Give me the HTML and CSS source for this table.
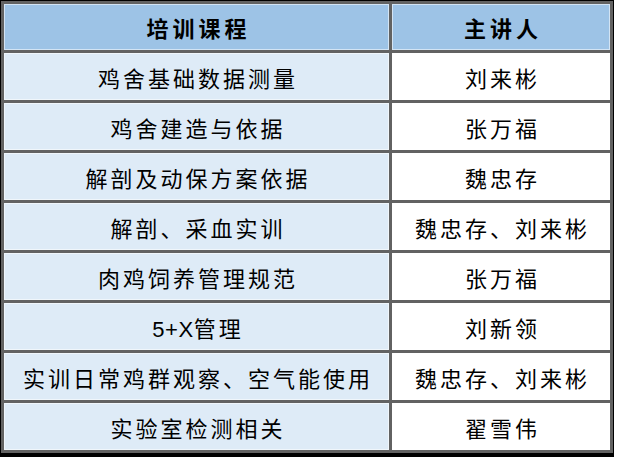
FILE: index.html
```html
<!DOCTYPE html>
<html lang="zh-CN">
<head>
<meta charset="utf-8">
<title>培训课程</title>
<link rel="stylesheet" href="styles.css">
</head>
<body>
<div class="frame">
<table class="schedule">
<thead>
<tr><th class="course">培训课程</th><th class="teacher">主讲人</th></tr>
</thead>
<tbody>
<tr><td class="course">鸡舍基础数据测量</td><td class="teacher">刘来彬</td></tr>
<tr><td class="course">鸡舍建造与依据</td><td class="teacher">张万福</td></tr>
<tr><td class="course">解剖及动保方案依据</td><td class="teacher">魏忠存</td></tr>
<tr><td class="course">解剖、采血实训</td><td class="teacher">魏忠存、刘来彬</td></tr>
<tr><td class="course">肉鸡饲养管理规范</td><td class="teacher">张万福</td></tr>
<tr><td class="course"><span class="latin">5+X</span>管理</td><td class="teacher">刘新领</td></tr>
<tr><td class="course">实训日常鸡群观察、空气能使用</td><td class="teacher">魏忠存、刘来彬</td></tr>
<tr><td class="course">实验室检测相关</td><td class="teacher">翟雪伟</td></tr>
</tbody>
</table>
</div>
</body>
</html>
```
FILE: styles.css
```css
html, body {
  margin: 0;
  padding: 0;
  background: #ffffff;
}

.frame {
  width: 610px;
  border-style: solid;
  border-color: #000000;
  border-width: 1px 3px 4px 1px;
}

.schedule {
  width: 610px;
  border-collapse: collapse;
  table-layout: fixed;
  font-family: "Liberation Sans", "Noto Sans CJK SC", sans-serif;
  font-size: 22px;
  color: #000000;
}

.schedule th,
.schedule td {
  border: 3px solid #626262;
  padding: 0 0 0 3px;
  text-align: center;
  vertical-align: middle;
  letter-spacing: 3px;
  box-shadow: inset 0 0 0 1px rgba(255, 255, 255, 0.55);
  white-space: nowrap;
}

.schedule th {
  height: 46px;
  background: #9dc3e6;
  font-weight: bold;
  letter-spacing: 4px;
  padding-left: 4px;
}

.schedule td {
  height: 47px;
}

.schedule .latin {
  letter-spacing: 0.5px;
}

.schedule th.course { width: 381px; }
.schedule th.teacher { width: 214px; }

.schedule td.course {
  background: #deebf7;
}

.schedule td.teacher {
  background: #ffffff;
}
```
